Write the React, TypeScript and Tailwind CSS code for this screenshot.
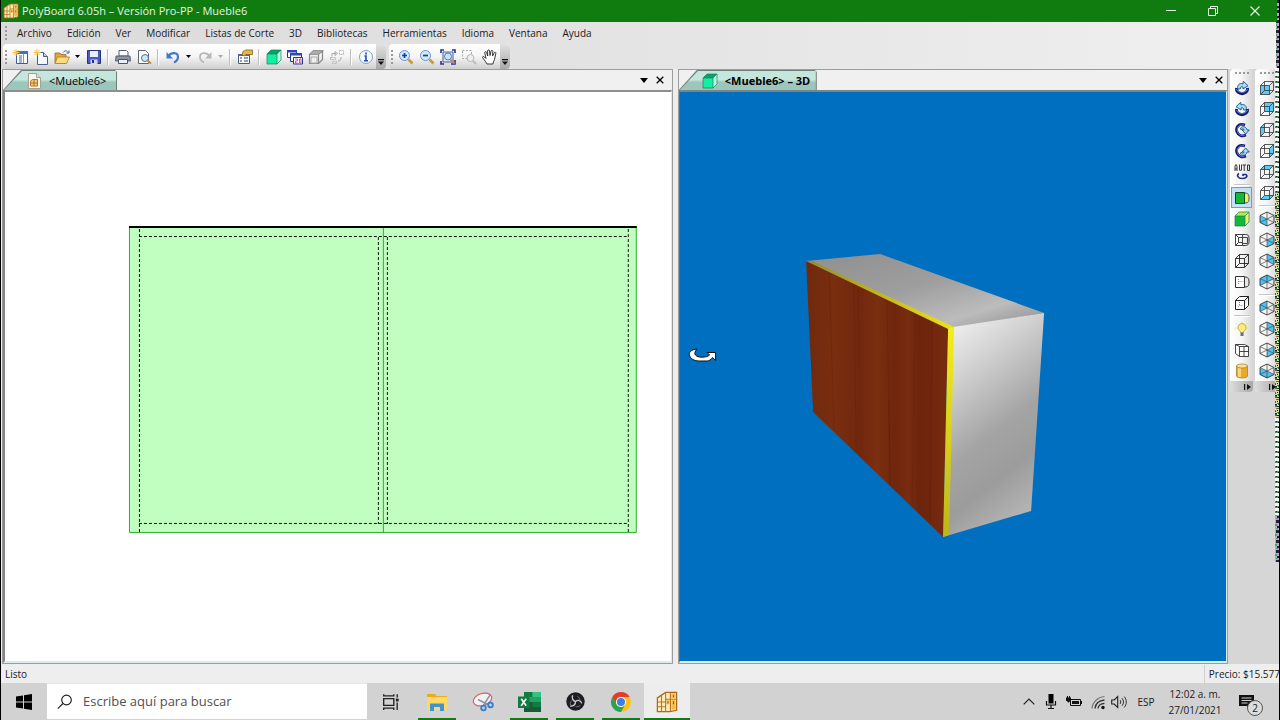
import type { ReactNode } from "react";

type Face = "front" | "back" | "left" | "right" | "top" | "bottom";

const faces: Record<Face, string> = {
  front: "1.5,5.5 10.5,5.5 10.5,14.5 1.5,14.5",
  back: "5.5,1.5 14.5,1.5 14.5,10.5 5.5,10.5",
  left: "1.5,5.5 5.5,1.5 5.5,10.5 1.5,14.5",
  right: "10.5,5.5 14.5,1.5 14.5,10.5 10.5,14.5",
  top: "1.5,5.5 5.5,1.5 14.5,1.5 10.5,5.5",
  bottom: "1.5,14.5 5.5,10.5 14.5,10.5 10.5,14.5",
};

function Svg({ children, size = "size-4" }: { children: ReactNode; size?: string }) {
  return (
    <svg viewBox="0 0 16 16" className={`${size} shrink-0`} fill="none" aria-hidden="true">
      {children}
    </svg>
  );
}

function FaceCube({ face }: { face: Face }) {
  return (
    <Svg>
      <polygon points={faces[face]} fill="#5cccf7" />
      <path
        d="M1.5 5.5h9v9h-9zM5.5 1.5h9v9h-9zM1.5 5.5l4-4M10.5 5.5l4-4M1.5 14.5l4-4M10.5 14.5l4-4"
        stroke="#333"
        strokeWidth=".8"
      />
    </Svg>
  );
}

const isoFaces = [
  "1,5 8,8 8,15 1,11.5",
  "8,8 15,5 15,11.5 8,15",
  "8,1 15,5 8,8 1,5",
  "8,1 15,4.5 15,11.5 8,8",
  "1,4.5 8,1 8,8 1,11.5",
  "8,8 15,11.5 8,15 1,11.5",
];

function IsoCube({ parts }: { parts: number[] }) {
  return (
    <Svg>
      {parts.map((p) => (
        <polygon key={p} points={isoFaces[p]} fill="#4cc4f2" />
      ))}
      <path d="M8 1l7 3.5v7L8 15l-7-3.5v-7z" stroke="#333" strokeWidth=".9" />
      <path d="M8 1v14M1 4.5l14 7M15 4.5l-14 7" stroke="#444" strokeWidth=".7" />
    </Svg>
  );
}

function SolidCube({ front = "#10f0a0", top = "#0aa06c", side = "#b8ffe4" }) {
  return (
    <Svg>
      <polygon points="1,5 11,5 11,15 1,15" fill={front} />
      <polygon points="1,5 5,1 15,1 11,5" fill={top} />
      <polygon points="11,5 15,1 15,11 11,15" fill={side} />
      <path d="M1 5l4-4h10v10l-4 4H1zM1 5h10v10M11 5l4-4" stroke="#1c7a5c" strokeWidth=".7" />
    </Svg>
  );
}

function Cabinet({ size = "size-4" }: { size?: string }) {
  return (
    <Svg size={size}>
      <path d="M1 5l6-4h8v13l-5 1H1z" fill="#fdeebb" stroke="#a8681c" strokeWidth=".9" />
      <path d="M7 1v14M1 8h6M1 11.500h6M7 6h8M4 3.200V15M10.500 1.500v13" stroke="#b87420" strokeWidth=".8" />
      <path d="M11.200 1.700h3v3.600h-3zM11.200 6.700h3V13.500h-3zM7.600 6.700h2.300v3H7.600z" fill="#f5bb4a" />
      <path d="M12.700 7.500v2M8.700 7.500v1.500M12.700 3v1.500" stroke="#8a5010" strokeWidth=".7" />
    </Svg>
  );
}

function Rotate({ kind }: { kind: 0 | 1 | 2 | 3 }) {
  return (
    <Svg>
      {kind < 2 ? (
        <g transform={kind === 1 ? "matrix(-1 0 0 1 16 0)" : undefined}>
          <path d="M2.500 8c-1 7.500 12 7.500 11 0" stroke="#0f1c70" strokeWidth="3" />
          <path d="M2.500 9c1 4.500 10 4.500 11 0" stroke="#7d9be0" strokeWidth=".8" />
          <path d="M4 9C2.500 5 6 2.500 9 4l.3-2.700 4.700 4.400-5 3.300V7C7.500 6.300 6 7 6.300 9z" fill="#a5def8" stroke="#1c4f86" strokeWidth=".9" />
        </g>
      ) : (
        <>
          <path d="M11 3C4 .5 1.500 6 3 10s5.500 4.500 9 3" stroke="#0f1c70" strokeWidth="2.800" />
          <path d="M10 3C5 2 2.500 6 3.500 9.500s4 4.500 7 4" stroke="#7d9be0" strokeWidth=".8" />
          <path
            d={
              kind === 2
                ? "M6.500 6c2.500-2.500 6-1 6.500 2h2.300l-3.600 4L8 8h2.200C10 6.800 8.500 6.300 7 7.800z"
                : "M6.500 11c2.500 2.500 6 1 6.500-2h2.300l-3.600-4L8 9h2.200c-.2 1.200-1.700 1.700-3.200.2z"
            }
            fill="#a5def8"
            stroke="#1c4f86"
            strokeWidth=".9"
          />
        </>
      )}
    </Svg>
  );
}

const spark = <path d="M4 0v7M.5 3.500h7M1.500 1l5 5M6.500 1l-5 5" stroke="#f5c945" />;

const icons = {
  newProject: (
    <Svg>
      <path d="M4.500 2.500h11v12h-11z" fill="#fff" stroke="#3b5c9c" />
      <path d="M4 2h12v3H4z" fill="#3f6fd0" />
      <path d="M7 7h3M7 9h3M7 11h3M7 13h3" stroke="#3d63b0" />
      <path d="M11.500 5v9" stroke="#7b96cf" />
      {spark}
    </Svg>
  ),
  newFile: (
    <Svg>
      <path d="M4.500 3.500h6l4 4v8h-10z" fill="#f4f8ff" stroke="#4b5f88" />
      <path d="M10.500 3.500v4h4" fill="#b9cdf2" stroke="#4b5f88" />
      {spark}
    </Svg>
  ),
  open: (
    <Svg>
      <path d="M1 4h5l1 1.500h5V14H1z" fill="#e2a83a" stroke="#8d6a1c" strokeWidth=".8" />
      <path d="M3.500 8H15.500l-3 6.500H1z" fill="#fddc80" stroke="#a87b20" strokeWidth=".8" />
      <path d="M9 3.500c2-2.500 4-2 5 0M15 1.500v2.500h-2.500" stroke="#3d5fa8" />
    </Svg>
  ),
  save: (
    <Svg>
      <path d="M1.500 1.500h13v13h-13z" fill="#4a5cc4" stroke="#27327e" />
      <path d="M4 2h8v6H4z" fill="#e8eefc" />
      <path d="M4.500 10.500h7V15h-7z" fill="#cfd8f0" />
      <path d="M6 11h2v3H6z" fill="#27327e" />
    </Svg>
  ),
  print: (
    <Svg>
      <path d="M4 1.500h7.500L13 3v4H4z" fill="#fff" stroke="#55607a" />
      <path d="M1 7h14l.5 5H.5z" fill="#8e97a8" stroke="#444c5c" strokeWidth=".8" />
      <path d="M3.500 10.500h9v4h-9z" fill="#e9eefa" stroke="#4c5568" />
    </Svg>
  ),
  preview: (
    <Svg>
      <path d="M2.500 1.500h7l3 3v10h-10z" fill="#fff" stroke="#5b6475" />
      <circle cx="9" cy="9" r="3.500" fill="#cfe8fa" stroke="#4f6d90" />
      <path d="M11.500 11.500l3.500 3" stroke="#c98a2a" strokeWidth="2" />
    </Svg>
  ),
  undo: (
    <Svg>
      <path d="M3.500 7c3-4 9.500-4 9.500 1 0 3-2 4.500-4 5.500" stroke="#3f7ad0" strokeWidth="2.200" />
      <path d="M1.500 3v6.500H8z" fill="#3f7ad0" />
    </Svg>
  ),
  redo: (
    <Svg>
      <path d="M12.500 7C9.500 3 3 3 3 8c0 3 2 4.500 4 5.500" stroke="#b8b8b8" strokeWidth="1.800" />
      <path d="M14.500 3v6.500H8z" fill="#b8b8b8" />
    </Svg>
  ),
  properties: (
    <Svg>
      <path d="M1.500 5.500h11v9h-11z" fill="#fff" stroke="#4c5c80" />
      <path d="M1 5h12v2H1z" fill="#53659a" />
      <path d="M3 9h2M3 12h2M7 9h4M7 12h4" stroke="#6b7ba0" strokeWidth="1.500" />
      <path d="M6 2.500L9 1h6.500v4.500H9L7.500 7 5 6z" fill="#e2b64c" stroke="#7f6420" strokeWidth=".8" />
    </Svg>
  ),
  windows2d: (
    <Svg>
      <path d="M.5 1.500h9v7h-9z" fill="#fff" stroke="#27398c" />
      <path d="M0 1h10v2.500H0z" fill="#2f49b0" />
      <path d="M3.500 4.500h11v8h-11z" fill="#fff" stroke="#27398c" />
      <path d="M3 4h12v2.500H3z" fill="#2f49b0" />
      <path d="M6.500 8.500h9v6.500h-9z" fill="#fff" stroke="#27398c" />
      <path d="M8 10h2.500v2H8.500v2H11M12.500 10v4h1.500V10z" stroke="#c030a0" strokeWidth=".8" />
    </Svg>
  ),
  grayBox: (
    <Svg>
      <path d="M1.500 5.500h9v9h-9zM1.500 5.500l4-4h9l-4 4M14.500 1.500v9l-4 4" fill="#eee" stroke="#888" strokeWidth="1.200" />
      <path d="M3 8h6v6H3z" stroke="#aaa" />
      <path d="M1.500 5.500l4-4h9l-4 4z" fill="#aaa" />
    </Svg>
  ),
  flow: (
    <Svg>
      <path d="M10.500 1.500h4v4h-4zM1.500 8.500h5v2h-5zM3.500 12.500h4v2h-4z" stroke="#b5b5b5" strokeDasharray="2 1" />
      <path d="M3 7.500V4.500h4M6 2.500l2.500 2L6 6.500zM9 12c2 0 3-1 3-4" stroke="#aaa" />
    </Svg>
  ),
  info: (
    <Svg>
      <circle cx="8" cy="8" r="6.500" fill="#f4f9ff" stroke="#7f9fd0" />
      <path d="M8 3.500v2M6.500 7H8v4.500M6 11.800h4" stroke="#2148b8" strokeWidth="1.600" />
    </Svg>
  ),
  marquee: (
    <Svg>
      <path d="M1.500 1.500h9v8h-9z" stroke="#aaa" strokeDasharray="2 1.500" />
      <circle cx="9.500" cy="9" r="3.500" fill="#eee" stroke="#b5b5b5" />
      <path d="M12 12l3 3" stroke="#bbb" strokeWidth="2" />
    </Svg>
  ),
  fit: (
    <Svg>
      <path d="M3 3h10v10H3z" fill="#dfeaf8" stroke="#4a5da0" />
      <path d="M1 4V1h3M12 1h3v3M15 11v4h-4M4 15H1v-3" stroke="#26348c" strokeWidth="1.600" />
      <circle cx="8" cy="7.500" r="3.500" fill="#c6e4fa" stroke="#5878b0" />
      <path d="M10.500 10.500l4 4" stroke="#b98a60" strokeWidth="1.800" />
    </Svg>
  ),
  hand: (
    <Svg>
      <path
        d="M5 15L3.500 12.500.8 9C0 7.500 1.500 7 2.500 8L4 9.500 2.800 4c-.3-1.500 1.300-2 1.800-.5L5.700 7 5.600 2c0-1.500 1.900-1.500 2 0L8 6.500 9 2.200c.4-1.400 2-1 1.800.4L10.500 7l1.700-3.200c.7-1.200 2-.5 1.600.7L12.800 9c-.2 2-1 3-1.500 4l-.3 2z"
        fill="#fff"
        stroke="#222"
        strokeWidth=".9"
      />
    </Svg>
  ),
  auto: (
    <Svg>
      <path d="M1 7V2l1-1.500L3 2v5M1 5h2M5.500.5v5.700h2V.5M8.500 1h3.500M10.200 1v6M13.500 1h2v5.500h-2z" stroke="#222" strokeWidth=".9" />
      <path d="M5 9.500c-3 1.500-1 5 3 5 4 0 6-2 4-4H9v1.500" stroke="#27308e" strokeWidth="1.700" />
    </Svg>
  ),
  doorWire: (
    <Svg>
      <path d="M1.500 2.500h7v11h-7zM8.500 5.500h5v6h-5M1.500 2.500l3 3h4M4.500 5.500v5h4M1.500 13.500l3-3" stroke="#333" strokeWidth=".9" />
      <path d="M8.500 2.500h3c3.500 0 3.500 2 3.500 5.500s0 5-3.500 5.500h-3" stroke="#222" strokeWidth=".9" />
    </Svg>
  ),
  doorLight: (
    <Svg>
      <path d="M1.500 2.500h9v11h-9z" fill="#fff" stroke="#333" />
      <path d="M10.500 3c4 0 4.500 2 4.500 5s0 5-4.500 5" stroke="#333" />
      <path d="M4.500 5v6M4.500 7.500h5" stroke="#999" strokeDasharray="1 1" />
    </Svg>
  ),
  doorGreen: (
    <Svg>
      <path d="M10.500 3c4 0 4.500 2 4.500 5s0 5-4.500 5" fill="#f4ef60" stroke="#555" />
      <path d="M1.500 2.500h9v11h-9z" fill="#12b83a" stroke="#0b4a1a" />
    </Svg>
  ),
  wireCube: (
    <Svg>
      <path d="M1.500 5.500h9v9h-9zM5.500 1.500h9v9h-9zM1.500 5.500l4-4M10.500 5.500l4-4M1.500 14.500l4-4M10.500 14.500l4-4" stroke="#222" strokeWidth=".9" />
    </Svg>
  ),
  hiddenCube: (
    <Svg>
      <path d="M1.500 5.500h9v9h-9zM1.500 5.500l4-4h9l-4 4M14.500 1.500v9l-4 4" fill="#fff" stroke="#222" />
      <path d="M5.500 7v4M4 12l1.500-1.500H9" stroke="#888" strokeDasharray="1 1" />
    </Svg>
  ),
  bulb: (
    <Svg>
      <path d="M8 0v2M2 2l1.500 1.500M14 2l-1.500 1.500M.5 7H3M13 7h2.500" stroke="#f6e36a" />
      <path d="M8 2.500a4 4 0 0 0-2.300 7.300c.5.500.8 1 .8 1.700h3c0-.7.300-1.200.8-1.700A4 4 0 0 0 8 2.500z" fill="#fbee7a" stroke="#b79e2c" strokeWidth=".8" />
      <path d="M6.500 11.500h3V15h-3z" fill="#6b6f86" />
    </Svg>
  ),
  crate: (
    <Svg>
      <path d="M1.500 2.500l4 2h9v10h-9l-4-3zM5.500 4.500v10M1.500 2.500h9l4 2M10 4.500v10M5.500 9.500h9" fill="#fff" stroke="#333" strokeWidth=".9" />
    </Svg>
  ),
  cylinder: (
    <Svg>
      <path d="M2.500 3v10c0 2.600 11 2.600 11 0V3z" fill="#e8a92c" stroke="#a3742a" strokeWidth=".7" />
      <path d="M4 5h3v9H4z" fill="#f9d774" />
      <ellipse cx="8" cy="3" rx="5.500" ry="2" fill="#fbe09a" stroke="#a3742a" strokeWidth=".7" />
    </Svg>
  ),
};

function Zoom({ plus }: { plus?: boolean }) {
  return (
    <Svg>
      <circle cx="6.500" cy="6.500" r="5" fill="#d3e9fb" stroke="#6d93c8" />
      <path d={plus ? "M6.500 4v5M4 6.500h5" : "M4 6.500h5"} stroke="#203a9c" strokeWidth="1.700" />
      <path d="M10.500 10.500l4 4" stroke="#c99a3a" strokeWidth="2.600" />
    </Svg>
  );
}

function Tool({ label, children }: { label: string; children: ReactNode }) {
  return (
    <button type="button" aria-label={label} className="flex h-[21px] w-[21px] shrink-0 items-center justify-center">
      {children}
    </button>
  );
}

function Arrow({ label, color = "text-black" }: { label: string; color?: string }) {
  return (
    <button type="button" aria-label={label} className={`flex w-[11px] items-center justify-center ${color}`}>
      <svg viewBox="0 0 5 3" className="h-[3px] w-[5px]" aria-hidden="true">
        <path d="M0 0h5L2.500 3z" fill="currentColor" />
      </svg>
    </button>
  );
}

const Sep = () => <span className="mx-[3px] h-4 w-0.5 shrink-0 border-l border-[#bdbdbd] bg-white" />;
const Grip = () => <span className="mx-0.5 h-3.5 w-0 border-l-2 border-dotted border-[#999]" />;
const VSep = () => <span className="mt-0.5 mb-px h-0.5 w-4 border-t border-[#c6c6c6] bg-white" />;

function BarEnd() {
  return (
    <button
      type="button"
      aria-label="Opciones de barra"
      className="ml-auto flex h-full w-[10px] items-end justify-center rounded-r bg-linear-to-b from-[#e2e2e2] to-[#a8a8a8] pb-1"
    >
      <svg viewBox="0 0 6 6" className="size-1.5" aria-hidden="true">
        <path d="M0 0h6v1.200H0zM0 2.500h6L3 6z" fill="#111" />
      </svg>
    </button>
  );
}

const barClass = "flex h-[25px] items-center rounded bg-linear-to-b from-white via-[#f5f5f5] to-[#cfcfcf]";

function SideBar({ children, label }: { children: ReactNode; label: string }) {
  return (
    <div
      role="toolbar"
      aria-label={label}
      className="flex w-[23px] flex-col items-center self-start rounded bg-linear-to-r from-white via-[#f6f6f6] to-[#d6d6d6] pt-[3px]"
    >
      <span className="mb-[3px] h-0.5 w-3.5 border-t-2 border-dotted border-[#999]" />
      {children}
      <button
        type="button"
        aria-label="Más botones"
        className="flex h-[11px] w-full items-center justify-end rounded-b bg-linear-to-r from-[#dcdcdc] to-[#a8a8a8] pr-0.5"
      >
        <svg viewBox="0 0 7 6" className="h-1.5 w-[7px]" aria-hidden="true">
          <path d="M0 0h1.200v6H0zM3 0v6l4-3z" fill="#111" />
        </svg>
      </button>
    </div>
  );
}

type HeaderProps = { tab: string; icon: ReactNode; tabClass: string; toolsClass: string };

function PanelHeader({ tab, icon, tabClass, toolsClass }: HeaderProps) {
  return (
    <div className="flex h-5 shrink-0 items-stretch justify-between bg-[#f0f0f0]">
      <button
        type="button"
        className={`${tabClass} bg-[#6f7f7c] p-px pb-0 [clip-path:polygon(0_100%,18px_0,calc(100%-2px)_0,100%_2px,100%_100%)]`}
      >
        <span className="flex h-full items-center gap-[7px] bg-linear-to-b from-[#c4e6dc] from-45% to-[#9cc6bb] to-60% pl-[22px] text-[11px] leading-4 whitespace-nowrap text-black [clip-path:polygon(0_100%,18px_0,100%_0,100%_100%)]">
          {icon}
          {tab}
        </span>
      </button>
      <div className={`flex items-center gap-2 ${toolsClass}`}>
        <button type="button" aria-label="Lista de ventanas">
          <svg viewBox="0 0 8 5" className="h-[5px] w-2" aria-hidden="true">
            <path d="M0 0h8L4 5z" fill="#000" />
          </svg>
        </button>
        <button type="button" aria-label="Cerrar ventana">
          <svg viewBox="0 0 8 8" className="size-2" aria-hidden="true">
            <path d="M.7.7l6.600 6.600M7.300.7L.7 7.300" stroke="#000" strokeWidth="1.300" />
          </svg>
        </button>
      </div>
    </div>
  );
}

function PlanView() {
  return (
    <svg viewBox="5 92 666 569" className="block h-full w-full" role="img" aria-label="Vista frontal">
      <path d="M129.500 227.500h507v305h-507z" fill="#c0ffc0" stroke="#2fae2f" />
      <path d="M383.500 228v304" stroke="#2fae2f" />
      <g stroke="#111" strokeDasharray="3 2" fill="none">
        <path d="M139.500 229v303M628.500 229v303M139 236.500h490M139 523.500h490" />
        <path d="M378.500 237v287M387.500 237v287" />
      </g>
      <path d="M129 227h508" stroke="#000" strokeWidth="2" />
    </svg>
  );
}

function ModelView() {
  return (
    <svg viewBox="680 92 546 569" className="block h-full w-full" role="img" aria-label="Vista 3D">
      <defs>
        <linearGradient id="top" x1="0" y1="0" x2="1" y2="1">
          <stop offset="0" stopColor="#8f8f8f" />
          <stop offset=".45" stopColor="#9e9e9e" />
          <stop offset=".75" stopColor="#bcbcbc" />
          <stop offset="1" stopColor="#8a8a8a" />
        </linearGradient>
        <linearGradient id="side" x1=".1" y1="0" x2=".45" y2="1">
          <stop offset="0" stopColor="#f4f4f4" />
          <stop offset=".25" stopColor="#d4d4d4" />
          <stop offset=".6" stopColor="#a4a4a4" />
          <stop offset=".8" stopColor="#9c9c9c" />
          <stop offset="1" stopColor="#b2b2b2" />
        </linearGradient>
        <linearGradient id="wood" x1="0" y1="0" x2="1" y2="0">
          <stop offset="0" stopColor="#70290e" />
          <stop offset=".2" stopColor="#7a2e10" />
          <stop offset=".38" stopColor="#70270d" />
          <stop offset=".5" stopColor="#7a2f10" />
          <stop offset=".62" stopColor="#6f260c" />
          <stop offset=".72" stopColor="#782c10" />
          <stop offset=".8" stopColor="#6c240c" />
          <stop offset="1" stopColor="#782b10" />
        </linearGradient>
        <linearGradient id="edge" x1="0" y1="0" x2="0" y2="1">
          <stop offset="0" stopColor="#f4ee1c" />
          <stop offset="1" stopColor="#bdb51c" />
        </linearGradient>
        <linearGradient id="edgeTop" x1="0" y1="0" x2="1" y2="0">
          <stop offset="0" stopColor="#96892a" />
          <stop offset="1" stopColor="#ece31a" />
        </linearGradient>
      </defs>
      <polygon points="806,261 880,254 1044,313 954,328" fill="url(#top)" />
      <polygon points="953,327 1044,313 1031,511 943,537" fill="url(#side)" />
      <polygon points="806,261 948,328 943,537 813,412" fill="url(#wood)" />
      <g stroke="#5c1c08" strokeOpacity=".3" fill="none">
        <path d="M829 273l5 158M854 285l2 166M887 301l3 184M889 400l1 85M915 313l-3 195M858 288l1 80M932 322l-2 200" />
      </g>
      <polygon points="806,261 812,261 954,327 948,329" fill="url(#edgeTop)" />
      <polygon points="948,328 954,327 949,535 943,537" fill="url(#edge)" />
      <path
        d="M697 349c-6 .5-9 3.500-7.500 7 2 4 6 5 10.500 5h7c2 0 4-1.500 5.500-3.500l3 3V352.500h-8.500l2.500 2.500c-1.500 1.500-4.500 2.200-7.500 2.200-6 0-10-3-5-8.200z"
        fill="#fff"
        stroke="#111"
      />
    </svg>
  );
}

type TaskProps = { label: string; active?: boolean; running?: boolean; children: ReactNode };

function TaskItem({ label, active, running, children }: TaskProps) {
  return (
    <button
      type="button"
      aria-label={label}
      className={`flex w-[46px] flex-col items-center pt-0.5 ${active ? "bg-[#ededed]" : ""}`}
    >
      <span className="flex flex-1 items-center">{children}</span>
      <span className={`h-0.5 ${active ? "w-full" : "w-[38px]"} ${running ? "bg-[#107c10]" : ""}`} />
    </button>
  );
}

const menus = ["Archivo", "Edición", "Ver", "Modificar", "Listas de Corte", "3D", "Bibliotecas", "Herramientas", "Idioma", "Ventana", "Ayuda"];
const viewFaces: Face[] = ["front", "back", "left", "right", "top", "bottom"];

export default function App() {
  return (
    <div className="relative flex min-h-screen flex-col overflow-hidden border-l border-black bg-[#ededed] font-['Open_Sans','Noto_Sans',sans-serif] text-[10px] text-[#1a1a1a]">
      <header className="flex h-[22px] shrink-0 items-center bg-[#107c10] pl-[2px] text-[#e4f4e4]">
        <Cabinet />
        <h1 className="ml-[3px] flex-1 text-[11px] leading-5 whitespace-nowrap">PolyBoard 6.05h – Versión Pro-PP - Mueble6</h1>
        <div className="flex items-center pr-[18px]">
          <button type="button" aria-label="Minimizar" className="flex w-[42px] justify-center">
            <svg viewBox="0 0 10 10" className="size-2.5" aria-hidden="true"><path d="M0 4.500h10" stroke="#e4f4e4" /></svg>
          </button>
          <button type="button" aria-label="Restaurar" className="flex w-[42px] justify-center">
            <svg viewBox="0 0 10 10" className="size-2.5" fill="none" aria-hidden="true"><path d="M.5 2.500h7v7h-7zM2.500 2.500v-2h7v7h-2" stroke="#e4f4e4" /></svg>
          </button>
          <button type="button" aria-label="Cerrar" className="-mr-3 ml-0.5 flex w-[38px] justify-center">
            <svg viewBox="0 0 10 10" className="size-2.5" aria-hidden="true"><path d="M.5.5l9 9M9.500.5l-9 9" stroke="#e4f4e4" strokeWidth="1.200" /></svg>
          </button>
        </div>
      </header>

      <div className="shrink-0 bg-linear-to-r from-[#dadada] via-[#e4e4e4] via-50% to-[#f0f0f0]">
        <nav className="flex h-[22px] items-center pl-0.5">
          <Grip />
          <div className="ml-2 flex gap-[15px]">
            {menus.map((m) => (
              <button key={m} type="button" className="leading-5 whitespace-nowrap">{m}</button>
            ))}
          </div>
        </nav>
        <div className="flex h-[25px] items-start gap-[3px] pl-0.5">
          <div role="toolbar" aria-label="Estándar" className={barClass}>
            <Grip />
            <Tool label="Nuevo proyecto">{icons.newProject}</Tool>
            <Tool label="Nuevo">{icons.newFile}</Tool>
            <Tool label="Abrir">{icons.open}</Tool>
            <Arrow label="Recientes" />
            <Tool label="Guardar">{icons.save}</Tool>
            <Sep />
            <Tool label="Imprimir">{icons.print}</Tool>
            <Tool label="Vista previa">{icons.preview}</Tool>
            <Sep />
            <Tool label="Deshacer">{icons.undo}</Tool>
            <Arrow label="Lista deshacer" />
            <Tool label="Rehacer">{icons.redo}</Tool>
            <Arrow label="Lista rehacer" color="text-[#aaa]" />
            <Sep />
            <Tool label="Propiedades">{icons.properties}</Tool>
            <Sep />
            <Tool label="Vista 3D"><SolidCube /></Tool>
            <Tool label="Vista 2D">{icons.windows2d}</Tool>
            <Tool label="Caja">{icons.grayBox}</Tool>
            <Tool label="Despiece">{icons.flow}</Tool>
            <Sep />
            <Tool label="Información">{icons.info}</Tool>
            <BarEnd />
          </div>
          <div role="toolbar" aria-label="Zoom" className={barClass}>
            <Grip />
            <Tool label="Acercar"><Zoom plus /></Tool>
            <Tool label="Alejar"><Zoom /></Tool>
            <Tool label="Ajustar">{icons.fit}</Tool>
            <Tool label="Zoom de ventana">{icons.marquee}</Tool>
            <Tool label="Mover">{icons.hand}</Tool>
            <BarEnd />
          </div>
        </div>
      </div>

      <main className="flex min-h-0 flex-1 pl-px">
        <div className="flex min-w-0 flex-1 gap-[5px]">
          <section className="flex min-w-0 flex-[671] flex-col border border-[#9c9c9c]">
            <PanelHeader
              tab="<Mueble6>"
              tabClass="w-[114px]"
              toolsClass="pr-2"
              icon={
                <Svg>
                  <path d="M2.500.5h8l4 4v11h-12z" fill="#f8f5ee" stroke="#a7a08c" />
                  <path d="M10.500.5v4h4" fill="#ddd" stroke="#a7a08c" />
                  <path d="M4.500 8l2-1.500h5V13h-7zM8 6.500V13M4.500 10H11.500" fill="#f6c870" stroke="#b06a20" strokeWidth=".9" />
                </Svg>
              }
            />
            <div className="relative min-h-0 flex-1 border-2 border-r border-t-[#8e8e8e] border-r-[#dcecec] border-b-[#dcecec] border-l-[#868686] bg-white">
              <div className="absolute inset-0"><PlanView /></div>
            </div>
          </section>
          <section className="flex min-w-0 flex-[550] flex-col border border-[#9c9c9c]">
            <PanelHeader tab="<Mueble6> – 3D" tabClass="w-[138px] font-bold" toolsClass="pr-1" icon={<SolidCube />} />
            <div className="relative min-h-0 flex-1 border-x border-y-2 border-t-[#7d8486] border-r-[#d3f0f8] border-b-[#d3f0f8] border-l-[#55707c] bg-[#006fbf]">
              <div className="absolute inset-0"><ModelView /></div>
            </div>
          </section>
        </div>
        <aside className="flex w-[52px] shrink-0 gap-0.5 bg-[#d6d6d6] pl-0.5">
          <SideBar label="Rotación y modo">
            <Tool label="Girar derecha"><Rotate kind={0} /></Tool>
            <Tool label="Girar izquierda"><Rotate kind={1} /></Tool>
            <Tool label="Girar abajo"><Rotate kind={2} /></Tool>
            <Tool label="Girar arriba"><Rotate kind={3} /></Tool>
            <Tool label="Automático">{icons.auto}</Tool>
            <VSep />
            <button type="button" aria-label="Puertas sólidas" aria-pressed="true" className="flex size-[21px] items-center justify-center border border-[#5ba3d9] bg-[#c3e0f4]">{icons.doorGreen}</button>
            <Tool label="Sólido"><SolidCube front="#12b83a" top="#b8ee40" side="#f4ef60" /></Tool>
            <Tool label="Alambre con puertas">{icons.doorWire}</Tool>
            <Tool label="Alambre">{icons.wireCube}</Tool>
            <Tool label="Puertas ocultas">{icons.doorLight}</Tool>
            <Tool label="Líneas ocultas">{icons.hiddenCube}</Tool>
            <VSep />
            <Tool label="Luz">{icons.bulb}</Tool>
            <Tool label="Caja abierta">{icons.crate}</Tool>
            <Tool label="Material">{icons.cylinder}</Tool>
          </SideBar>
          <SideBar label="Vistas">
            {viewFaces.map((f) => (
              <Tool key={f} label={`Vista ${f}`}><FaceCube face={f} /></Tool>
            ))}
            <VSep />
            <Tool label="Isométrica 1"><IsoCube parts={[0]} /></Tool>
            <Tool label="Isométrica 2"><IsoCube parts={[1]} /></Tool>
            <Tool label="Isométrica 3"><IsoCube parts={[3]} /></Tool>
            <Tool label="Isométrica 4"><IsoCube parts={[4, 2]} /></Tool>
            <VSep />
            <Tool label="Isométrica 5"><IsoCube parts={[4]} /></Tool>
            <Tool label="Isométrica 6"><IsoCube parts={[3]} /></Tool>
            <Tool label="Isométrica 7"><IsoCube parts={[1]} /></Tool>
            <Tool label="Isométrica 8"><IsoCube parts={[0, 5]} /></Tool>
          </SideBar>
        </aside>
      </main>

      <div className="flex h-[19px] shrink-0 items-center justify-between bg-[#eeeeee] pt-px pl-1 leading-[18px]">
        <span>Listo</span>
        <span className="border-l border-[#cfcfcf] pl-1 whitespace-nowrap">Precio: $15.577</span>
      </div>

      <footer className="flex h-[37px] shrink-0 bg-[#d2d2d2]">
        <button type="button" aria-label="Inicio" className="flex w-[46px] shrink-0 items-center justify-center">
          <svg viewBox="0 0 16 16" className="size-4" aria-hidden="true">
            <path d="M0 2.500l7-1v6H0zM8 1.300L16 0v7.500H8zM0 8.500h7v6l-7-1zM8 8.500h8V16l-8-1.300z" fill="#000" />
          </svg>
        </button>
        <label className="mr-px mb-px flex w-80 shrink-0 items-center border-t border-[#e6e6e6] bg-white pl-[10px]">
          <Svg>
            <circle cx="9.500" cy="6" r="4.800" stroke="#222" strokeWidth="1.200" />
            <path d="M6 9.500L.8 14.700" stroke="#222" strokeWidth="1.200" />
          </Svg>
          <input
            type="text"
            aria-label="Buscar"
            placeholder="Escribe aquí para buscar"
            className="ml-2.5 min-w-0 flex-1 bg-transparent text-[13px] outline-none placeholder:text-[#505050]"
          />
        </label>
        <TaskItem label="Vista de tareas">
          <Svg size="size-[18px]">
            <path d="M1.500 1v1.500h9V1M1.500 15v-1.500h9V15M1.500 5h9v6h-9z" stroke="#222" strokeWidth="1.200" />
            <path d="M13.500 1v3M13.500 8.500V15" stroke="#222" strokeWidth="1.200" />
            <path d="M12.300 5h2.500v2.500h-2.500z" fill="#222" />
          </Svg>
        </TaskItem>
        <TaskItem label="Explorador de archivos" running>
          <svg viewBox="0 0 20 18" className="h-[18px] w-5" aria-hidden="true">
            <path d="M0 1h8l1.500 2H20v14H0z" fill="#e9ab20" />
            <path d="M0 4h20v13H0z" fill="#ffd868" />
            <path d="M3 18v-7.500h14V18h-4v-4H7v4z" fill="#3f93cf" />
          </svg>
        </TaskItem>
        <TaskItem label="Recortes">
          <svg viewBox="0 0 22 20" className="h-5 w-[22px]" fill="none" aria-hidden="true">
            <ellipse cx="10.500" cy="7.500" rx="9.500" ry="6" transform="rotate(-18 10.500 7.500)" fill="#f4f1f4" stroke="#d4606a" strokeWidth="1.200" />
            <path d="M18 3l-7 11M6 7.500l10 5" stroke="#8b95a5" strokeWidth="1.500" />
            <circle cx="11.500" cy="16" r="2.300" stroke="#2f7fd0" strokeWidth="1.800" />
            <circle cx="18.500" cy="13" r="2.300" stroke="#2f7fd0" strokeWidth="1.800" />
          </svg>
        </TaskItem>
        <TaskItem label="Excel" running>
          <svg viewBox="0 0 23 20" className="h-5 w-[23px]" aria-hidden="true">
            <path d="M6 0h17v20H6z" fill="#21a366" />
            <path d="M6 0h8.500v5H6z" fill="#107c41" />
            <path d="M14.500 0H23v5h-8.500z" fill="#33c481" />
            <path d="M6 10h17v10H6z" fill="#185c37" />
            <path d="M14.500 10H23v5h-8.500z" fill="#107c41" />
            <path d="M0 4.500h11.500v11.500H0z" fill="#107c41" />
            <path d="M3.200 6.800l5 7M8.200 6.800l-5 7" stroke="#fff" strokeWidth="1.600" />
          </svg>
        </TaskItem>
        <TaskItem label="OBS" running>
          <svg viewBox="0 0 20 20" className="size-[19px]" fill="none" aria-hidden="true">
            <circle cx="10" cy="10" r="9.700" fill="#1d1d22" />
            <path d="M7 3.500c-1 3 0 5.500 3 6.500 0 3-2 5-5.500 5M10 10c2.500-2 5.500-1.500 6.500 2" stroke="#c9c9cd" strokeWidth="1.500" />
            <path d="M12 4.500c2 1 3 3 2.500 5M6 9c-1.500 1.500-2 3-1 5M15 14c-1.500 1.500-3.500 2-5 1" stroke="#77777d" />
          </svg>
        </TaskItem>
        <TaskItem label="Chrome" running>
          <svg viewBox="0 0 20 20" className="size-5" aria-hidden="true">
            <circle cx="10" cy="10" r="10" fill="#fbc116" />
            <path d="M1.340 5A10 10 0 0 1 18.660 5H10a5 5 0 0 0-4.330 7.500z" fill="#e33b2e" />
            <path d="M1.340 5A10 10 0 0 0 10 20l4.330-7.500a5 5 0 0 1-8.660 0z" fill="#2ba24c" />
            <circle cx="10" cy="10" r="5" fill="#fff" />
            <circle cx="10" cy="10" r="4" fill="#3b7de9" />
          </svg>
        </TaskItem>
        <TaskItem label="PolyBoard" active running>
          <Cabinet size="size-[22px]" />
        </TaskItem>

        <div className="ml-auto flex items-center pr-[17px]">
          <button type="button" aria-label="Iconos ocultos" className="flex w-[22px] justify-center">
            <svg viewBox="0 0 12 7" className="h-[7px] w-3" fill="none" aria-hidden="true"><path d="M.7 6.300L6 1l5.300 5.300" stroke="#222" strokeWidth="1.200" /></svg>
          </button>
          <button type="button" aria-label="Micrófono" className="flex w-[22px] justify-center">
            <Svg><path d="M5.500 0h5v9.500h-5z" fill="#000" /><path d="M3.500 7v4h9V7M8 11v3.500M5 14.500h6" stroke="#111" strokeWidth="1.200" /></Svg>
          </button>
          <button type="button" aria-label="Batería" className="flex w-6 justify-center">
            <Svg><path d="M4.500 5.500h10v6h-10z" stroke="#111" /><path d="M6 7h7v3H6zM15 7h1v3h-1zM0 3.500h5V7H4L3 8.500H2L1 7H0zM1 2h1v2H1zM3 2h1v2H3z" fill="#111" /></Svg>
          </button>
          <button type="button" aria-label="Red" className="flex w-[23px] justify-center">
            <Svg>
              <path d="M2 14.500C2.500 8 8 3 14.500 2.500" stroke="#777" strokeWidth="1.200" />
              <path d="M5 14.500C5.500 10 9 6.500 14.500 6M8 14.500c.3-3 3-5 6.500-5.200" stroke="#333" strokeWidth="1.300" />
              <circle cx="13" cy="13.500" r="1.700" fill="#111" />
            </Svg>
          </button>
          <button type="button" aria-label="Volumen" className="flex w-5 justify-center">
            <Svg>
              <path d="M.7 6h2.500l3.500-3.500v11L3.200 10H.7z" stroke="#222" strokeWidth="1.100" />
              <path d="M9 6c1 1.200 1 2.800 0 4M11 4.200c2 2.300 2 5.300 0 7.600M13.200 2.500c2.800 3.300 2.800 7.700 0 11" stroke="#333" />
            </Svg>
          </button>
          <button type="button" className="w-[34px] text-center leading-4">ESP</button>
          <button type="button" className="w-16 text-center leading-4 whitespace-nowrap">
            12:02 a. m.<br />27/01/2021
          </button>
          <button type="button" aria-label="Notificaciones" className="relative ml-3 flex h-8 w-6 items-center">
            <Svg><path d="M0 1h15v11h-4l-3 3v-3H0z" fill="#111" /><path d="M2.500 4h10M2.500 6.500h10M2.500 9h6" stroke="#d2d2d2" /></Svg>
            <span className="absolute top-3.5 left-2 flex size-4 items-center justify-center rounded-full border border-[#555] bg-[#dcdcdc] leading-none">2</span>
          </button>
        </div>
      </footer>

      <svg className="pointer-events-none absolute top-0 right-0 h-full w-[5px]" aria-hidden="true">
        <defs>
          <pattern id="dashes" width="4" height="5" patternUnits="userSpaceOnUse">
            <path d="M0 0h4v5H0z" fill="#f6f8f6" />
            <path d="M0 1h4v2H0z" fill="#4d8f62" />
            <path d="M1 1h1v1H1zM3 2h1v1H3z" fill="#15301c" />
          </pattern>
          <pattern id="specks" width="4" height="9" patternUnits="userSpaceOnUse">
            <path d="M0 0h4v9H0z" fill="#d9dba0" />
            <path d="M0 0h2v2H0zM2 3h2v1H2zM0 5h1v2H0zM3 7h1v2H3z" fill="#2f7a3c" />
            <path d="M2 1h2v1H2zM0 8h2v1H0zM2 5h1v1H2z" fill="#23232b" />
            <path d="M1 3h1v1H1zM2 7h1v1H2z" fill="#c2503a" />
          </pattern>
          <pattern id="mixed" width="4" height="10" patternUnits="userSpaceOnUse">
            <path d="M0 0h4v10H0z" fill="#b9a6c4" />
            <path d="M1 0h3v3H1zM2 6h2v2H2z" fill="#2a1f3a" />
            <path d="M0 4h2v2H0zM1 8h2v1H1z" fill="#4fa06a" />
          </pattern>
        </defs>
        <rect x="2" width="2" height="22" fill="url(#mixed)" />
        <rect y="22" x="1" width="3" height="46" fill="url(#mixed)" />
        <rect y="68" width="4" height="125" fill="url(#dashes)" />
        <rect y="193" width="4" height="225" fill="url(#specks)" />
        <rect y="418" width="4" height="97" fill="url(#dashes)" />
        <rect y="515" width="4" height="47" fill="url(#mixed)" />
        <rect x="4" width="1" height="100%" fill="#000" />
      </svg>
    </div>
  );
}
